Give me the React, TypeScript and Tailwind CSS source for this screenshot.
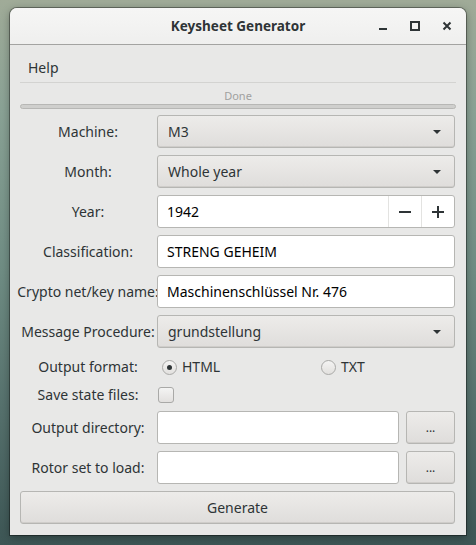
import { useState } from "react";

const FONT = "font-['Noto_Sans',_'DejaVu_Sans',_sans-serif]";

function Arrow() {
  return (
    <svg width="10" height="6" viewBox="0 0 10 6" className="shrink-0">
      <path d="M1 1h8L5 5z" fill="#2e3436" />
    </svg>
  );
}

function Combo({ value }: { value: string }) {
  return (
    <div className="flex h-[33px] items-center justify-between rounded-[3px] border border-[#b6b6b3] bg-gradient-to-b from-[#edecea] to-[#dfdddb] pl-[10px] pr-[12px] shadow-[inset_0_-1px_0_#cfcdca]">
      <span>{value}</span>
      <Arrow />
    </div>
  );
}

function Entry({ value, className = "" }: { value?: string; className?: string }) {
  return (
    <div
      className={`flex h-[33px] items-center rounded-[3px] border border-[#b6b6b3] bg-white px-[9px] text-[#000] ${className}`}
    >
      {value}
    </div>
  );
}

function Button({ children, className = "" }: { children: React.ReactNode; className?: string }) {
  return (
    <button
      className={`flex h-[33px] items-center justify-center rounded-[3px] border border-[#b6b6b3] bg-gradient-to-b from-[#edecea] to-[#dfdddb] text-[#2e3436] shadow-[inset_0_-1px_0_#cfcdca] ${className}`}
    >
      {children}
    </button>
  );
}

function Label({ children }: { children: React.ReactNode }) {
  return <div className="flex items-center justify-center whitespace-nowrap pr-[1px]">{children}</div>;
}

function Radio({ checked, label, onClick }: { checked: boolean; label: string; onClick: () => void }) {
  return (
    <div className="flex cursor-pointer items-center gap-[5px]" onClick={onClick}>
      <span className="flex h-[15px] w-[15px] items-center justify-center rounded-full border border-[#a9a9a7] bg-gradient-to-b from-[#f4f4f3] to-[#e2e0de]">
        {checked && <span className="h-[5px] w-[5px] rounded-full bg-[#2e3436]" />}
      </span>
      <span>{label}</span>
    </div>
  );
}

export default function App() {
  const [format, setFormat] = useState("html");
  const [saveState, setSaveState] = useState(false);

  return (
    <div
      className={`h-[545px] w-[476px] overflow-hidden bg-[linear-gradient(180deg,#a0ab98_0%,#8aa295_20%,#6f8c83_50%,#56716d_75%,#3d5655_100%)] pl-[10px] pt-[8px] ${FONT} text-[14px] leading-[18px] text-[#2e3436]`}
    >
      {/* Window */}
      <div className="flex h-[527px] w-[456px] flex-col overflow-hidden rounded-t-[7px] bg-[#e8e8e7] shadow-[0_0_0_1px_rgba(0,0,0,0.35),0_2px_8px_rgba(0,0,0,0.35)]">
        {/* Title bar */}
        <div className="relative flex h-[37px] shrink-0 items-center justify-center border-b border-[#a3a3a1] bg-gradient-to-b from-[#f6f6f5] to-[#efefee]">
          <span className="text-[13.5px] font-bold text-[#2e3436]">Keysheet Generator</span>
          <div className="absolute right-[14px] top-0 flex h-full items-center gap-[22px]">
            <svg width="10" height="10" viewBox="0 0 10 10">
              <rect x="1" y="7" width="8" height="2" fill="#2e3436" />
            </svg>
            <svg width="10" height="10" viewBox="0 0 10 10">
              <rect x="1" y="1" width="8" height="8" fill="none" stroke="#2e3436" strokeWidth="2" />
            </svg>
            <svg width="10" height="10" viewBox="0 0 10 10">
              <path d="M1.5 1.5l7 7M8.5 1.5l-7 7" stroke="#2e3436" strokeWidth="2" />
            </svg>
          </div>
        </div>

        {/* Body */}
        <div className="flex flex-1 flex-col px-[10px] pt-[10px]">
          {/* Menu bar */}
          <div className="flex h-[28px] items-center border-b border-[#d3d3d1] pb-[1px] pl-[8px]">
            <span>Help</span>
          </div>

          {/* Progress */}
          <div className="flex h-[21px] items-center justify-center pt-[5px] text-[11px] text-[#a0a19f]">Done</div>
          <div className="h-[5px] rounded-[3px] border border-[#b7b7b5] bg-[#cfcfcd]" />

          {/* Form */}
          <div className="mt-[6px] grid grid-cols-[137px_298px] gap-y-[7px]">
            <Label>Machine:</Label>
            <Combo value="M3" />

            <Label>Month:</Label>
            <Combo value="Whole year" />

            <Label>Year:</Label>
            <div className="flex h-[33px] overflow-hidden rounded-[3px] border border-[#b6b6b3] bg-white">
              <div className="flex flex-1 items-center px-[9px] text-black">1942</div>
              <div className="flex w-[33px] items-center justify-center border-l border-[#e3e3e1]">
                <svg width="12" height="12" viewBox="0 0 12 12">
                  <rect x="0" y="5" width="12" height="2" fill="#2e3436" />
                </svg>
              </div>
              <div className="flex w-[33px] items-center justify-center border-l border-[#e3e3e1]">
                <svg width="12" height="12" viewBox="0 0 12 12">
                  <path d="M0 6h12M6 0v12" stroke="#2e3436" strokeWidth="2" />
                </svg>
              </div>
            </div>

            <Label>Classification:</Label>
            <Entry value="STRENG GEHEIM" />

            <Label>Crypto net/key name:</Label>
            <Entry value="Maschinenschlüssel Nr. 476" />

            <Label>Message Procedure:</Label>
            <Combo value="grundstellung" />

            <Label>Output format:</Label>
            <div className="grid h-[24px] grid-cols-[159px_1fr] items-center pl-[5px]">
              <Radio checked={format === "html"} label="HTML" onClick={() => setFormat("html")} />
              <Radio checked={format === "txt"} label="TXT" onClick={() => setFormat("txt")} />
            </div>

            <Label>Save state files:</Label>
            <div className="flex h-[18px] items-center pl-[1px]">
              <span
                onClick={() => setSaveState(!saveState)}
                className="flex h-[16px] w-[16px] cursor-pointer items-center justify-center rounded-[3px] border border-[#a9a9a7] bg-gradient-to-b from-[#f4f4f3] to-[#e2e0de]"
              >
                {saveState && (
                  <svg width="10" height="10" viewBox="0 0 10 10">
                    <path d="M1.5 5l2.5 2.5 4.5-5" stroke="#2e3436" strokeWidth="2" fill="none" />
                  </svg>
                )}
              </span>
            </div>

            <Label>Output directory:</Label>
            <div className="flex gap-[7px]">
              <Entry className="flex-1" />
              <Button className="w-[49px] text-[12px]">...</Button>
            </div>

            <Label>Rotor set to load:</Label>
            <div className="flex gap-[7px]">
              <Entry className="flex-1" />
              <Button className="w-[49px] text-[12px]">...</Button>
            </div>

            <Button className="col-span-2">Generate</Button>
          </div>
        </div>
      </div>
    </div>
  );
}
